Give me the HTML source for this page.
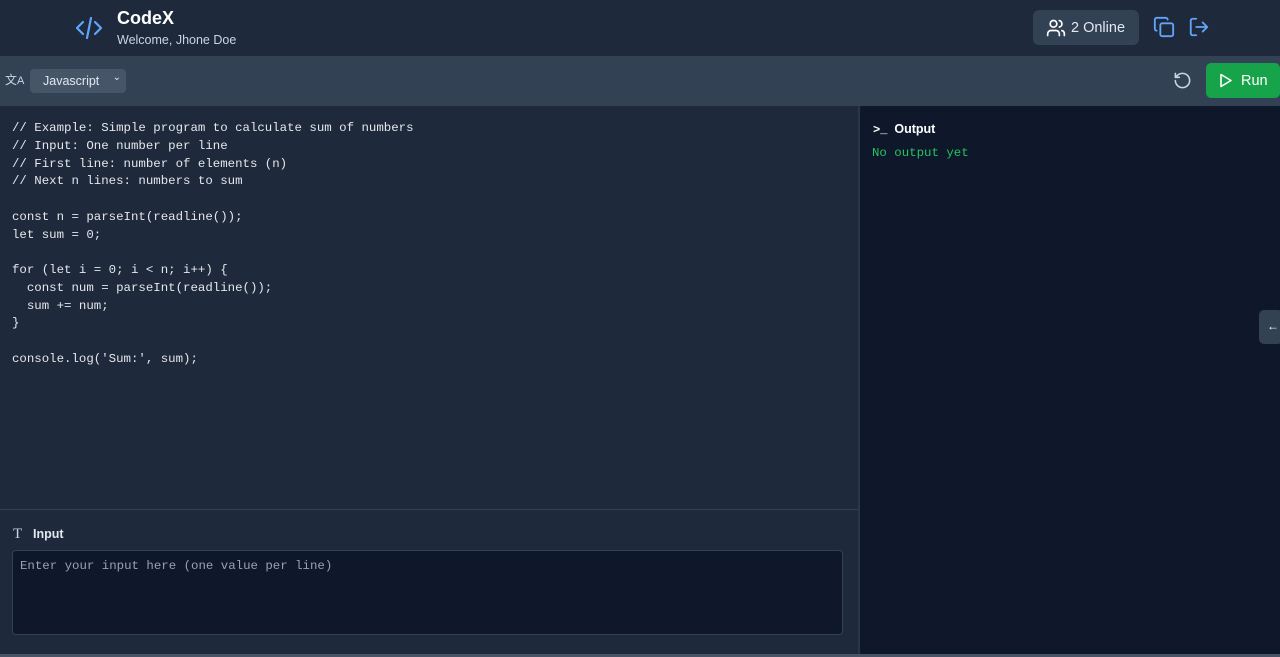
<!DOCTYPE html>
<html><head><style>
*{margin:0;padding:0;box-sizing:border-box}
body{width:1280px;height:657px;overflow:hidden;background:#1e293b;font-family:"Liberation Sans",sans-serif;position:relative}
.hdr{position:absolute;left:0;top:0;width:1280px;height:56px;background:#1e293b}
.tb{position:absolute;left:0;top:56px;width:1280px;height:50px;background:#334155}
.mono{font-family:"Liberation Mono",monospace}
.code{position:absolute;left:12px;top:120px;font-size:12.4px;line-height:17.75px;color:#e5e7eb;white-space:pre}
.out{position:absolute;left:858px;top:106px;width:422px;height:551px;background:#0f172a;border-left:2px solid #2b3648}
.inp{position:absolute;left:0;top:509px;width:858px;height:148px;border-top:1px solid #334155;background:#1e293b}
</style></head><body>
<div class="hdr">
<svg style="position:absolute;left:75px;top:15px" width="28" height="26" viewBox="0 0 28 26" fill="none" stroke="#60a5fa" stroke-width="2.2" stroke-linecap="round" stroke-linejoin="round"><path d="M8 7 2 13l6 6M20 7l6 6-6 6M16 3l-4 20"/></svg>
<div style="position:absolute;left:117px;top:8px;color:#fff;font-weight:bold;font-size:18px">CodeX</div>
<div style="position:absolute;left:117px;top:33px;color:#cbd5e1;font-size:12.5px">Welcome, Jhone Doe</div>
<div style="position:absolute;left:1033px;top:10px;width:106px;height:35px;background:#334155;border-radius:6px"></div>
<svg style="position:absolute;left:1046px;top:18px" width="20" height="20" viewBox="0 0 24 24" fill="none" stroke="#fff" stroke-width="2" stroke-linecap="round"><circle cx="9" cy="7" r="4"/><path d="M2 21v-2a4 4 0 0 1 4-4h6a4 4 0 0 1 4 4v2M16 3.1a4 4 0 0 1 0 7.8M22 21v-2a4 4 0 0 0-3-3.9"/></svg>
<div style="position:absolute;left:1071px;top:20px;color:#e2e8f0;font-size:14.5px">2 Online</div>
<svg style="position:absolute;left:1153px;top:16px" width="22" height="22" viewBox="0 0 24 24" fill="none" stroke="#60a5fa" stroke-width="2" stroke-linecap="round"><rect x="8" y="8" width="14" height="14" rx="2"/><path d="M4 16c-1.1 0-2-.9-2-2V4c0-1.1.9-2 2-2h10c1.1 0 2 .9 2 2"/></svg>
<svg style="position:absolute;left:1188px;top:16px" width="22" height="22" viewBox="0 0 24 24" fill="none" stroke="#60a5fa" stroke-width="2" stroke-linecap="round" stroke-linejoin="round"><path d="M9 21H5a2 2 0 0 1-2-2V5a2 2 0 0 1 2-2h4M16 17l5-5-5-5M21 12H9"/></svg>
</div>
<div class="tb">
<div style="position:absolute;left:5px;top:15px;color:#cbd5e1;font-size:12px">文<span style="font-size:11px">A</span></div>
<div style="position:absolute;left:30px;top:13px;width:96px;height:24px;background:#475569;border-radius:4px;color:#e2e8f0;font-size:12.5px;padding:5px 0 0 13px">Javascript<span style="position:absolute;right:5px;top:3px;font-size:10px">⌄</span></div>
<svg style="position:absolute;left:1173px;top:15px" width="19" height="19" viewBox="0 0 24 24" fill="none" stroke="#cbd5e1" stroke-width="2" stroke-linecap="round"><path d="M3 12a9 9 0 1 0 9-9 9.75 9.75 0 0 0-6.74 2.74L3 8M3 3v5h5"/></svg>
<div style="position:absolute;left:1206px;top:7px;width:74px;height:35px;background:#16a34a;border-radius:5px"></div>
<svg style="position:absolute;left:1219px;top:17px" width="14" height="15" viewBox="0 0 14 15" fill="none" stroke="#fff" stroke-width="1.6" stroke-linejoin="round"><path d="M2 1.5l10 6-10 6z"/></svg>
<div style="position:absolute;left:1241px;top:17px;color:#fff;font-size:14.5px">Run</div>
</div>
<div class="code mono">// Example: Simple program to calculate sum of numbers
// Input: One number per line
// First line: number of elements (n)
// Next n lines: numbers to sum

const n = parseInt(readline());
let sum = 0;

for (let i = 0; i &lt; n; i++) {
  const num = parseInt(readline());
  sum += num;
}

console.log('Sum:', sum);</div>
<div class="out">
<div style="position:absolute;left:13px;top:16px;color:#fff;font-size:12.5px;font-weight:bold"><span class="mono" style="font-size:12px">&gt;_</span>&nbsp; Output</div>
<div class="mono" style="position:absolute;left:12px;top:40px;color:#22c55e;font-size:12.4px">No output yet</div>
</div>
<div style="position:absolute;left:1259px;top:310px;width:24px;height:34px;background:#334155;border-radius:5px;color:#fff;font-size:12px;padding:9px 0 0 8px">←</div>
<div class="inp">
<div style="position:absolute;left:13px;top:16px;color:#cbd5e1;font-size:15px;font-family:'Liberation Serif',serif">T</div>
<div style="position:absolute;left:33px;top:17px;color:#e2e8f0;font-size:12.5px;font-weight:bold">Input</div>
<div style="position:absolute;left:12px;top:40px;width:831px;height:85px;background:#0f172a;border:1px solid #334155;border-radius:4px"></div>
<div class="mono" style="position:absolute;left:20px;top:49px;color:#94a3b8;font-size:12.4px">Enter your input here (one value per line)</div>
</div>
<div style="position:absolute;left:0;top:654px;width:1280px;height:3px;background:#475569"></div>
</body></html>
